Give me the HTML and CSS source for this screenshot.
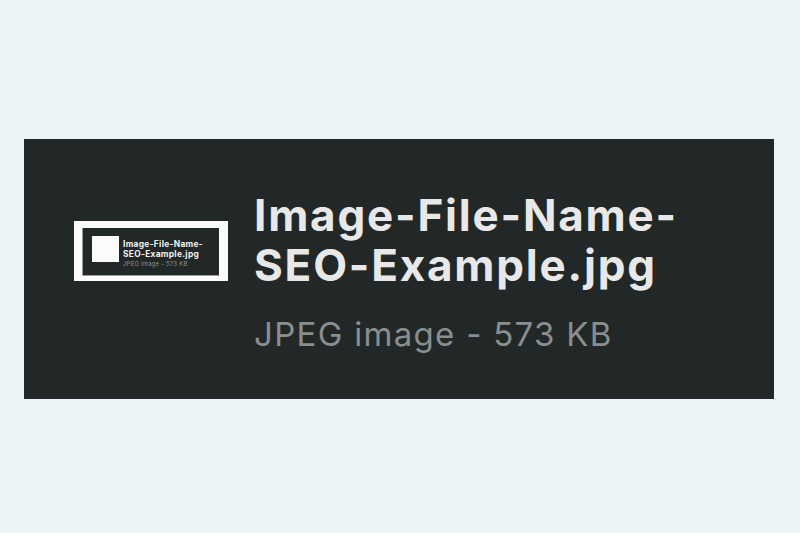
FILE: index.html
```html
<!DOCTYPE html>
<html lang="en">
<head>
    <meta charset="UTF-8">
    <meta name="viewport" content="width=device-width, initial-scale=1.0">
    <title>Image File Name SEO Example</title>
    <link rel="stylesheet" href="styles.css">
</head>
<body>
    <div class="panel">
        <div class="thumb">
            <div class="thumb-inner">
                <div class="thumb-square"></div>
                <div class="thumb-text">
                    <div class="thumb-name">Image-File-Name-<br>SEO-Example.jpg</div>
                    <div class="thumb-meta">JPEG image - 573 KB</div>
                </div>
            </div>
        </div>
        <div class="info">
            <div class="file-name">Image-File-Name-<br>SEO-Example.jpg</div>
            <div class="file-meta">JPEG image - 573 KB</div>
        </div>
    </div>
</body>
</html>
```

FILE: styles.css
```css
body {
    margin: 0;
    padding: 139px 26px 0 24px;
    background: #edf4f6;
    font-family: Inter, "Liberation Sans", sans-serif;
}

.panel {
    display: flex;
    align-items: flex-start;
    height: 260px;
    padding-left: 50px;
    background: #212827;
}

.thumb {
    margin-top: 82px;
    width: 137px;
    height: 48px;
    border-style: solid;
    border-color: #fbfbfb;
    border-width: 7px 9px 5px 8px;
    box-shadow: inset 1px -1px 0 #9a9c9c;
}

.thumb-inner {
    display: flex;
    align-items: flex-start;
    padding: 8px 0 0 10px;
}

.thumb-square {
    width: 27px;
    height: 26px;
    background: #fbfbfb;
}

.thumb-text {
    margin-left: 4px;
    margin-top: 3px;
}

.thumb-name {
    color: #f2f2f2;
    font-size: 8.4px;
    font-weight: 700;
    line-height: 10px;
    letter-spacing: 0.3px;
}

.thumb-meta {
    color: #8e9191;
    font-size: 6px;
    line-height: 9px;
    letter-spacing: 0.2px;
}

.info {
    margin-left: 26px;
    margin-top: 51px;
}

.file-name {
    color: #e8e8e8;
    font-size: 44px;
    font-weight: 700;
    line-height: 50px;
    letter-spacing: 1.8px;
}

.file-meta {
    margin-top: 24px;
    color: #8b8e8e;
    font-size: 33px;
    line-height: 40px;
    letter-spacing: 1.3px;
}
```
